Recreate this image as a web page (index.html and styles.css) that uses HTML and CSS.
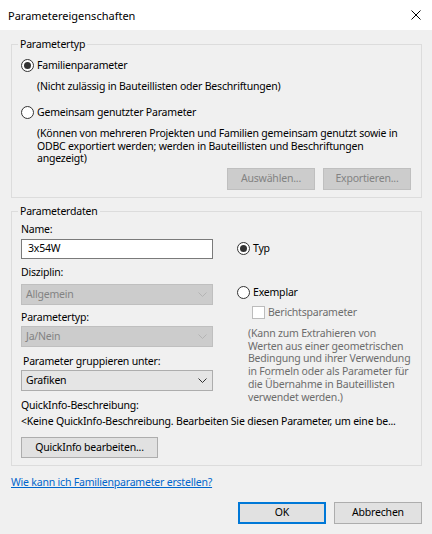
FILE: index.html
```html
<!DOCTYPE html>
<html lang="de">
<head>
<meta charset="utf-8">
<title>Parametereigenschaften</title>
<link rel="stylesheet" href="styles.css">
</head>
<body>
<div class="titlebar">
  <span class="title">Parametereigenschaften</span>
  <svg class="close" width="10" height="10" viewBox="0 0 10 10"><path d="M0.5 0.5 L9.5 9.5 M9.5 0.5 L0.5 9.5" stroke="#000" stroke-width="1" fill="none"/></svg>
</div>
<div class="content">
  <div class="group g1">
    <div class="legend">Parametertyp</div>
    <div class="radio-row r1">
      <svg class="radio" width="13" height="13" viewBox="0 0 13 13"><circle cx="6.5" cy="6.5" r="6" fill="#fff" stroke="#333"/><circle cx="6.5" cy="6.5" r="3.5" fill="#333"/></svg>
      <span>Familienparameter</span>
    </div>
    <div class="desc d1">(Nicht zulässig in Bauteillisten oder Beschriftungen)</div>
    <div class="radio-row r2">
      <svg class="radio" width="13" height="13" viewBox="0 0 13 13"><circle cx="6.5" cy="6.5" r="6" fill="#fff" stroke="#333"/></svg>
      <span>Gemeinsam genutzter Parameter</span>
    </div>
    <div class="desc d2">(Können von mehreren Projekten und Familien gemeinsam genutzt sowie in<br>ODBC exportiert werden; werden in Bauteillisten und Beschriftungen<br>angezeigt)</div>
    <div class="btn-row">
      <div class="btn disabled">Auswählen...</div>
      <div class="btn disabled">Exportieren...</div>
    </div>
  </div>

  <div class="group g2">
    <div class="legend">Parameterdaten</div>
    <div class="grid">
      <div class="col-left">
        <div class="label">Name:</div>
        <div class="input">3x54W</div>
        <div class="label l-disz">Disziplin:</div>
        <div class="select disabled"><span>Allgemein</span><svg width="9" height="5" viewBox="0 0 9 5"><path d="M0.5 0.5 L4.5 4.5 L8.5 0.5" stroke="#b4b4b4" fill="none"/></svg></div>
        <div class="label l-typ">Parametertyp:</div>
        <div class="select disabled s-typ"><span>Ja/Nein</span><svg width="9" height="5" viewBox="0 0 9 5"><path d="M0.5 0.5 L4.5 4.5 L8.5 0.5" stroke="#b4b4b4" fill="none"/></svg></div>
        <div class="label l-grp">Parameter gruppieren unter:</div>
        <div class="select s-grp"><span>Grafiken</span><svg width="9" height="5" viewBox="0 0 9 5"><path d="M0.5 0.5 L4.5 4.5 L8.5 0.5" stroke="#333" fill="none"/></svg></div>
        <div class="label l-qi">QuickInfo-Beschreibung:</div>
      </div>
      <div class="col-right">
        <div class="radio-row rt">
          <svg class="radio" width="13" height="13" viewBox="0 0 13 13"><circle cx="6.5" cy="6.5" r="6" fill="#fff" stroke="#333"/><circle cx="6.5" cy="6.5" r="3.5" fill="#333"/></svg>
          <span>Typ</span>
        </div>
        <div class="radio-row re">
          <svg class="radio" width="13" height="13" viewBox="0 0 13 13"><circle cx="6.5" cy="6.5" r="6" fill="#fff" stroke="#333"/></svg>
          <span>Exemplar</span>
        </div>
        <div class="check-row">
          <span class="checkbox"></span>
          <span>Berichtsparameter</span>
        </div>
        <div class="gray-desc">(Kann zum Extrahieren von<br>Werten aus einer geometrischen<br>Bedingung und ihrer Verwendung<br>in Formeln oder als Parameter für<br>die Übernahme in Bauteillisten<br>verwendet werden.)</div>
      </div>
    </div>
    <div class="qi-text">&lt;Keine QuickInfo-Beschreibung. Bearbeiten Sie diesen Parameter, um eine be...</div>
    <div class="btn qi-btn">QuickInfo bearbeiten...</div>
  </div>

  <a class="help" href="#">Wie kann ich Familienparameter erstellen?</a>

  <div class="footer">
    <div class="btn ok">OK</div>
    <div class="btn">Abbrechen</div>
  </div>
</div>
</body>
</html>
```

FILE: styles.css
```css
* { box-sizing: border-box; }
html, body { margin: 0; padding: 0; }
body {
  width: 432px;
  height: 534px;
  background: #f0f0f0;
  font-family: "Noto Sans", "Segoe UI", sans-serif;
  font-size: 10.5px;
  letter-spacing: -0.2px;
  line-height: 13px;
  color: #000;
  overflow: hidden;
}
.titlebar {
  height: 30px;
  background: #fff;
  display: flex;
  align-items: center;
  justify-content: space-between;
  padding: 0 11px 0 8px;
}
.title { font-size: 11px; letter-spacing: 0; }
.close { display: block; }
.content { padding: 14px 10px 0 11px; }
.group {
  border: 1px solid #dcdcdc;
  padding: 0 10px 0 9px;
}
.legend {
  display: table;
  margin: -7px 0 0 -3px;
  padding: 0 2px;
  background: #f0f0f0;
  height: 13px;
}
.radio-row {
  display: flex;
  align-items: center;
  height: 13px;
  gap: 3px;
}
.radio { display: block; flex: none; }
.r1 { margin-top: 8px; }
.desc { margin-left: 16px; white-space: nowrap; }
.d1 { margin-top: 8px; }
.r2 { margin-top: 13px; }
.d2 { margin-top: 8px; line-height: 12.6px; }
.btn-row {
  display: flex;
  justify-content: flex-end;
  gap: 8px;
  margin-top: 3px;
  padding-bottom: 7px;
}
.btn {
  height: 22px;
  width: 88px;
  display: flex;
  align-items: center;
  justify-content: center;
  background: #e1e1e1;
  border: 1px solid #adadad;
}
.btn.disabled {
  background: #cccccc;
  border-color: #bfbfbf;
  color: #838383;
}

.g2 { margin-top: 13px; padding-bottom: 7px; }
.grid {
  display: grid;
  grid-template-columns: 192px 1fr;
  column-gap: 24px;
  margin-top: 5px;
}
.label { height: 13px; }
.input {
  margin-top: 3px;
  height: 20px;
  background: #fff;
  border: 1px solid #7a7a7a;
  padding: 0 6px;
  display: flex;
  align-items: center;
}
.l-disz { margin-top: 7px; }
.select {
  margin-top: 5px;
  height: 21px;
  display: flex;
  align-items: center;
  justify-content: space-between;
  padding: 0 5px 0 4px;
  background: #e5e5e5;
  border: 1px solid #adadad;
}
.select svg { display: block; }
.select.disabled {
  background: #cccccc;
  border-color: #bfbfbf;
  color: #838383;
}
.l-typ { margin-top: 6px; }
.s-typ { margin-top: 2px; }
.l-grp { margin-top: 8px; margin-left: 2px; }
.s-grp { margin-top: 2px; }
.l-qi { margin-top: 8px; }

.rt { margin-top: 19px; }
.re { margin-top: 31px; }
.check-row {
  display: flex;
  align-items: center;
  gap: 3px;
  margin: 7px 0 0 15px;
  height: 13px;
  color: #6d6d6d;
}
.checkbox {
  width: 13px;
  height: 13px;
  background: #fff;
  border: 1px solid #bcbcbc;
  flex: none;
}
.gray-desc {
  margin: 8px 0 0 11px;
  line-height: 12.8px;
  color: #6d6d6d;
  white-space: nowrap;
}
.qi-text { margin-top: 3px; white-space: nowrap; overflow: hidden; }
.qi-btn { margin-top: 9px; width: 137px; height: 21px; }

.help {
  display: block;
  margin-top: 10px;
  color: #0066cc;
  text-decoration: underline;
  width: max-content;
}
.footer {
  display: flex;
  justify-content: flex-end;
  gap: 8px;
  margin-top: 13px;
}
.footer .btn { width: 88px; height: 22px; }
.footer .ok { border: 2px solid #0078d7; }
```
